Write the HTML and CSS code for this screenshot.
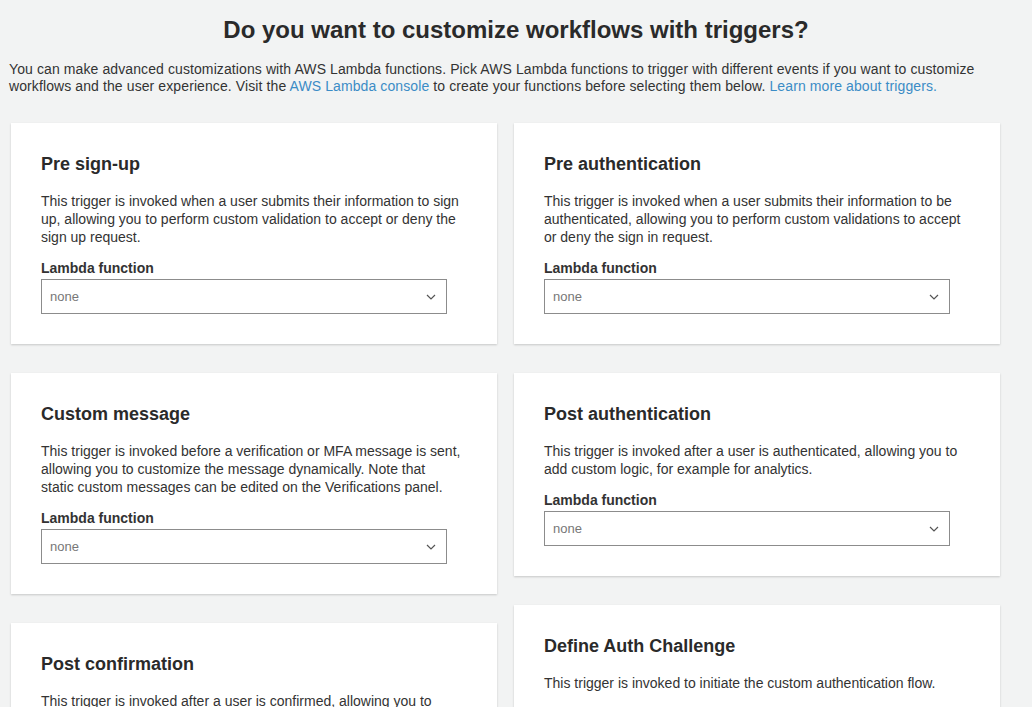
FILE: index.html
```html
<!DOCTYPE html>
<html>
	<head>
		<meta charset="utf-8">
		<title>Triggers</title>
		<link rel="stylesheet" href="styles.css">
	</head>
	<body>
		<div class="page">
			<h1 class="title">Do you want to customize workflows with triggers?</h1>
			<p class="intro">You can make advanced customizations with AWS Lambda functions. Pick AWS Lambda functions to trigger with different events if you want to customize workflows and the user experience. Visit the <a href="#">AWS Lambda console</a> to create your functions before selecting them below. <a href="#">Learn more about triggers.</a></p>

			<div class="grid">
				<div class="col">
					<div class="card">
						<h3>Pre sign-up</h3>
						<p>This trigger is invoked when a user submits their information to sign up, allowing you to perform custom validation to accept or deny the sign up request.</p>
						<label>Lambda function</label>
						<div class="select"><span>none</span><svg width="10" height="6" viewBox="0 0 10 6"><path d="M1 1l4 4 4-4" fill="none" stroke="#555" stroke-width="1.2"/></svg></div>
					</div>
					<div class="card">
						<h3>Custom message</h3>
						<p>This trigger is invoked before a verification or MFA message is sent, allowing you to customize the message dynamically. Note that static custom messages can be edited on the Verifications panel.</p>
						<label>Lambda function</label>
						<div class="select"><span>none</span><svg width="10" height="6" viewBox="0 0 10 6"><path d="M1 1l4 4 4-4" fill="none" stroke="#555" stroke-width="1.2"/></svg></div>
					</div>
					<div class="card">
						<h3>Post confirmation</h3>
						<p>This trigger is invoked after a user is confirmed, allowing you to send custom messages or to add custom logic, for example for analytics.</p>
						<label>Lambda function</label>
						<div class="select"><span>none</span><svg width="10" height="6" viewBox="0 0 10 6"><path d="M1 1l4 4 4-4" fill="none" stroke="#555" stroke-width="1.2"/></svg></div>
					</div>
				</div>
				<div class="col">
					<div class="card">
						<h3>Pre authentication</h3>
						<p>This trigger is invoked when a user submits their information to be authenticated, allowing you to perform custom validations to accept or deny the sign in request.</p>
						<label>Lambda function</label>
						<div class="select"><span>none</span><svg width="10" height="6" viewBox="0 0 10 6"><path d="M1 1l4 4 4-4" fill="none" stroke="#555" stroke-width="1.2"/></svg></div>
					</div>
					<div class="card">
						<h3>Post authentication</h3>
						<p>This trigger is invoked after a user is authenticated, allowing you to add custom logic, for example for analytics.</p>
						<label>Lambda function</label>
						<div class="select"><span>none</span><svg width="10" height="6" viewBox="0 0 10 6"><path d="M1 1l4 4 4-4" fill="none" stroke="#555" stroke-width="1.2"/></svg></div>
					</div>
					<div class="card">
						<h3>Define Auth Challenge</h3>
						<p>This trigger is invoked to initiate the custom authentication flow.</p>
						<label>Lambda function</label>
						<div class="select"><span>none</span><svg width="10" height="6" viewBox="0 0 10 6"><path d="M1 1l4 4 4-4" fill="none" stroke="#555" stroke-width="1.2"/></svg></div>
					</div>
				</div>
			</div>
		</div>
	</body>
</html>
```

FILE: styles.css
```css
* {
	margin: 0;
	padding: 0;
	box-sizing: border-box;
}

body {
	background-color: #f2f3f3;
	font-family: "Liberation Sans", Arial, sans-serif;
	color: #333;
	overflow: hidden;
}

.page {
	padding: 0 32px 0 9px;
}

.title {
	font-size: 24px;
	line-height: 28px;
	font-weight: bold;
	text-align: center;
	color: #2a2a2a;
	padding: 16px 0 0 23px;
}

.intro {
	font-size: 14px;
	line-height: 17px;
	margin-top: 17px;
	letter-spacing: 0.1px;
	color: #333;
}

.intro a {
	color: #3b8cc6;
	text-decoration: none;
}

.grid {
	display: flex;
	gap: 17px;
	margin-top: 28px;
	padding-left: 2px;
}

.col {
	width: 486px;
	display: flex;
	flex-direction: column;
	gap: 29px;
}

.card {
	background-color: #fff;
	padding: 30px 30px 30px 30px;
	box-shadow: 0 1px 2px rgba(0, 0, 0, 0.18);
}

.card h3 {
	font-size: 18px;
	line-height: 22px;
	font-weight: bold;
	color: #2a2a2a;
}

.card p {
	font-size: 14px;
	line-height: 18px;
	margin-top: 17px;
	padding-right: 5.5px;
}

.card label {
	display: block;
	font-size: 14px;
	line-height: 18px;
	font-weight: bold;
	margin-top: 13px;
}

.select {
	display: flex;
	align-items: center;
	justify-content: space-between;
	width: 406px;
	height: 35px;
	margin-top: 2px;
	border: 1px solid #8c8c8c;
	padding: 0 10px 0 8px;
	font-size: 13px;
	color: #777;
}
```
